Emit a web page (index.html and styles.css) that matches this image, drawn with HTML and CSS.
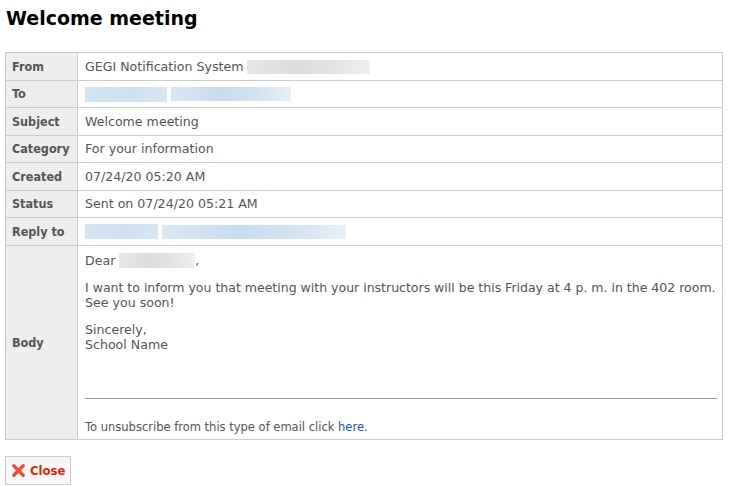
FILE: index.html
```html
<!DOCTYPE html>
<html>
<head>
<meta charset="utf-8">
<link rel="stylesheet" href="styles.css">
</head>
<body>
<h1 class="title">Welcome meeting</h1>
<table class="mail">
  <colgroup><col class="col-label"><col></colgroup>
  <tr><th>From</th><td>GEGI Notification System <span class="blur blur-grey" style="width:123px"></span></td></tr>
  <tr><th>To</th><td><span class="blur blur-blue" style="width:82px"></span> <span class="blur blur-blue2" style="width:120px"></span></td></tr>
  <tr><th>Subject</th><td>Welcome meeting</td></tr>
  <tr><th>Category</th><td>For your information</td></tr>
  <tr><th>Created</th><td>07/24/20 05:20 AM</td></tr>
  <tr><th>Status</th><td>Sent on 07/24/20 05:21 AM</td></tr>
  <tr><th>Reply to</th><td><span class="blur blur-blue" style="width:73px"></span> <span class="blur blur-blue2" style="width:184px"></span></td></tr>
  <tr class="body-row"><th>Body</th><td>
    <div class="message">
      <p>Dear <span class="blur blur-grey name" style="width:76px"></span>,</p>
      <p><span class="nowrap">I want to inform you that meeting with your instructors will be this Friday at 4 p. m. in the 402 room.</span><br>See you soon!</p>
      <p>Sincerely,<br>School Name</p>
    </div>
    <hr class="rule">
    <p class="unsub">To unsubscribe from this type of email click <a href="#">here</a>.</p>
  </td></tr>
</table>
<button class="close-btn" type="button">
  <svg width="15" height="15" viewBox="0 0 16 16" aria-hidden="true"><path d="M3 3 L13 13 M13 3 L3 13" stroke="#e8503a" stroke-width="3.6" stroke-linecap="round"/></svg>
  <span>Close</span>
</button>
</body>
</html>
```
FILE: styles.css
```css
html, body { margin: 0; padding: 0; background: #fff; }
body {
  padding: 0 5px;
  font-family: "DejaVu Sans", sans-serif;
  font-size: 12.6px;
  color: #555;
}
.title {
  margin: 0;
  padding: 7px 0 0 1px;
  height: 52px;
  box-sizing: border-box;
  font-family: "DejaVu Sans", sans-serif;
  font-size: 19px;
  font-weight: bold;
  color: #000;
}
.mail {
  width: 718px;
  table-layout: fixed;
  border-collapse: collapse;
  border: 1px solid #ccc;
}
.col-label { width: 72px; }
.mail th, .mail td {
  border: 1px solid #ccc;
  height: 26.5px;
  padding: 0 7px;
  vertical-align: middle;
  text-align: left;
}
.mail th {
  padding: 0 6px;
  background: #eee;
  font-family: "DejaVu Sans Condensed", "DejaVu Sans", sans-serif;
  font-weight: bold;
  color: #555;
  font-size: 12.5px;
}
.mail td { color: #555; }
.nowrap { white-space: nowrap; }
.message .nowrap { font-size: 12.55px; letter-spacing: -0.02px; }
.blur {
  display: inline-block;
  height: 14px;
  vertical-align: middle;
}
.blur-grey { background: linear-gradient(90deg, #e8e8e8, #dcdcdc 40%, #e4e4e4 70%, #efefef); }
.blur-blue { height: 15px; background: linear-gradient(90deg, #d3e4f2, #cfe1f0 60%, #d8e7f3); }
.blur-blue2 { background: linear-gradient(90deg, #dbe8f4, #c8dcee 40%, #d2e3f1 70%, #e8f1f8); }
.body-row td { padding: 7px 7px 5px; vertical-align: top; }
.message p { margin: 0 0 12px; line-height: 15px; }
.message p:last-child { margin-bottom: 0; }
.name { height: 15px; vertical-align: -3px; }
.rule {
  margin: 46px 0 0 0;
  border: 0;
  border-top: 1px solid #999;
  width: 632px;
}
.unsub {
  margin: 21px 0 0;
  font-size: 11.5px;
  color: #555;
}
.unsub a { color: #1a55b8; text-decoration: none; }
.close-btn {
  margin-top: 16px;
  display: flex;
  align-items: center;
  gap: 4px;
  height: 29px;
  padding: 0 4px 0 5px;
  background: #f7f7f7;
  border: 1px solid #ccc;
  font-family: "DejaVu Sans Condensed", "DejaVu Sans", sans-serif;
  font-size: 13px;
  font-weight: bold;
  color: #d42a10;
}
```
